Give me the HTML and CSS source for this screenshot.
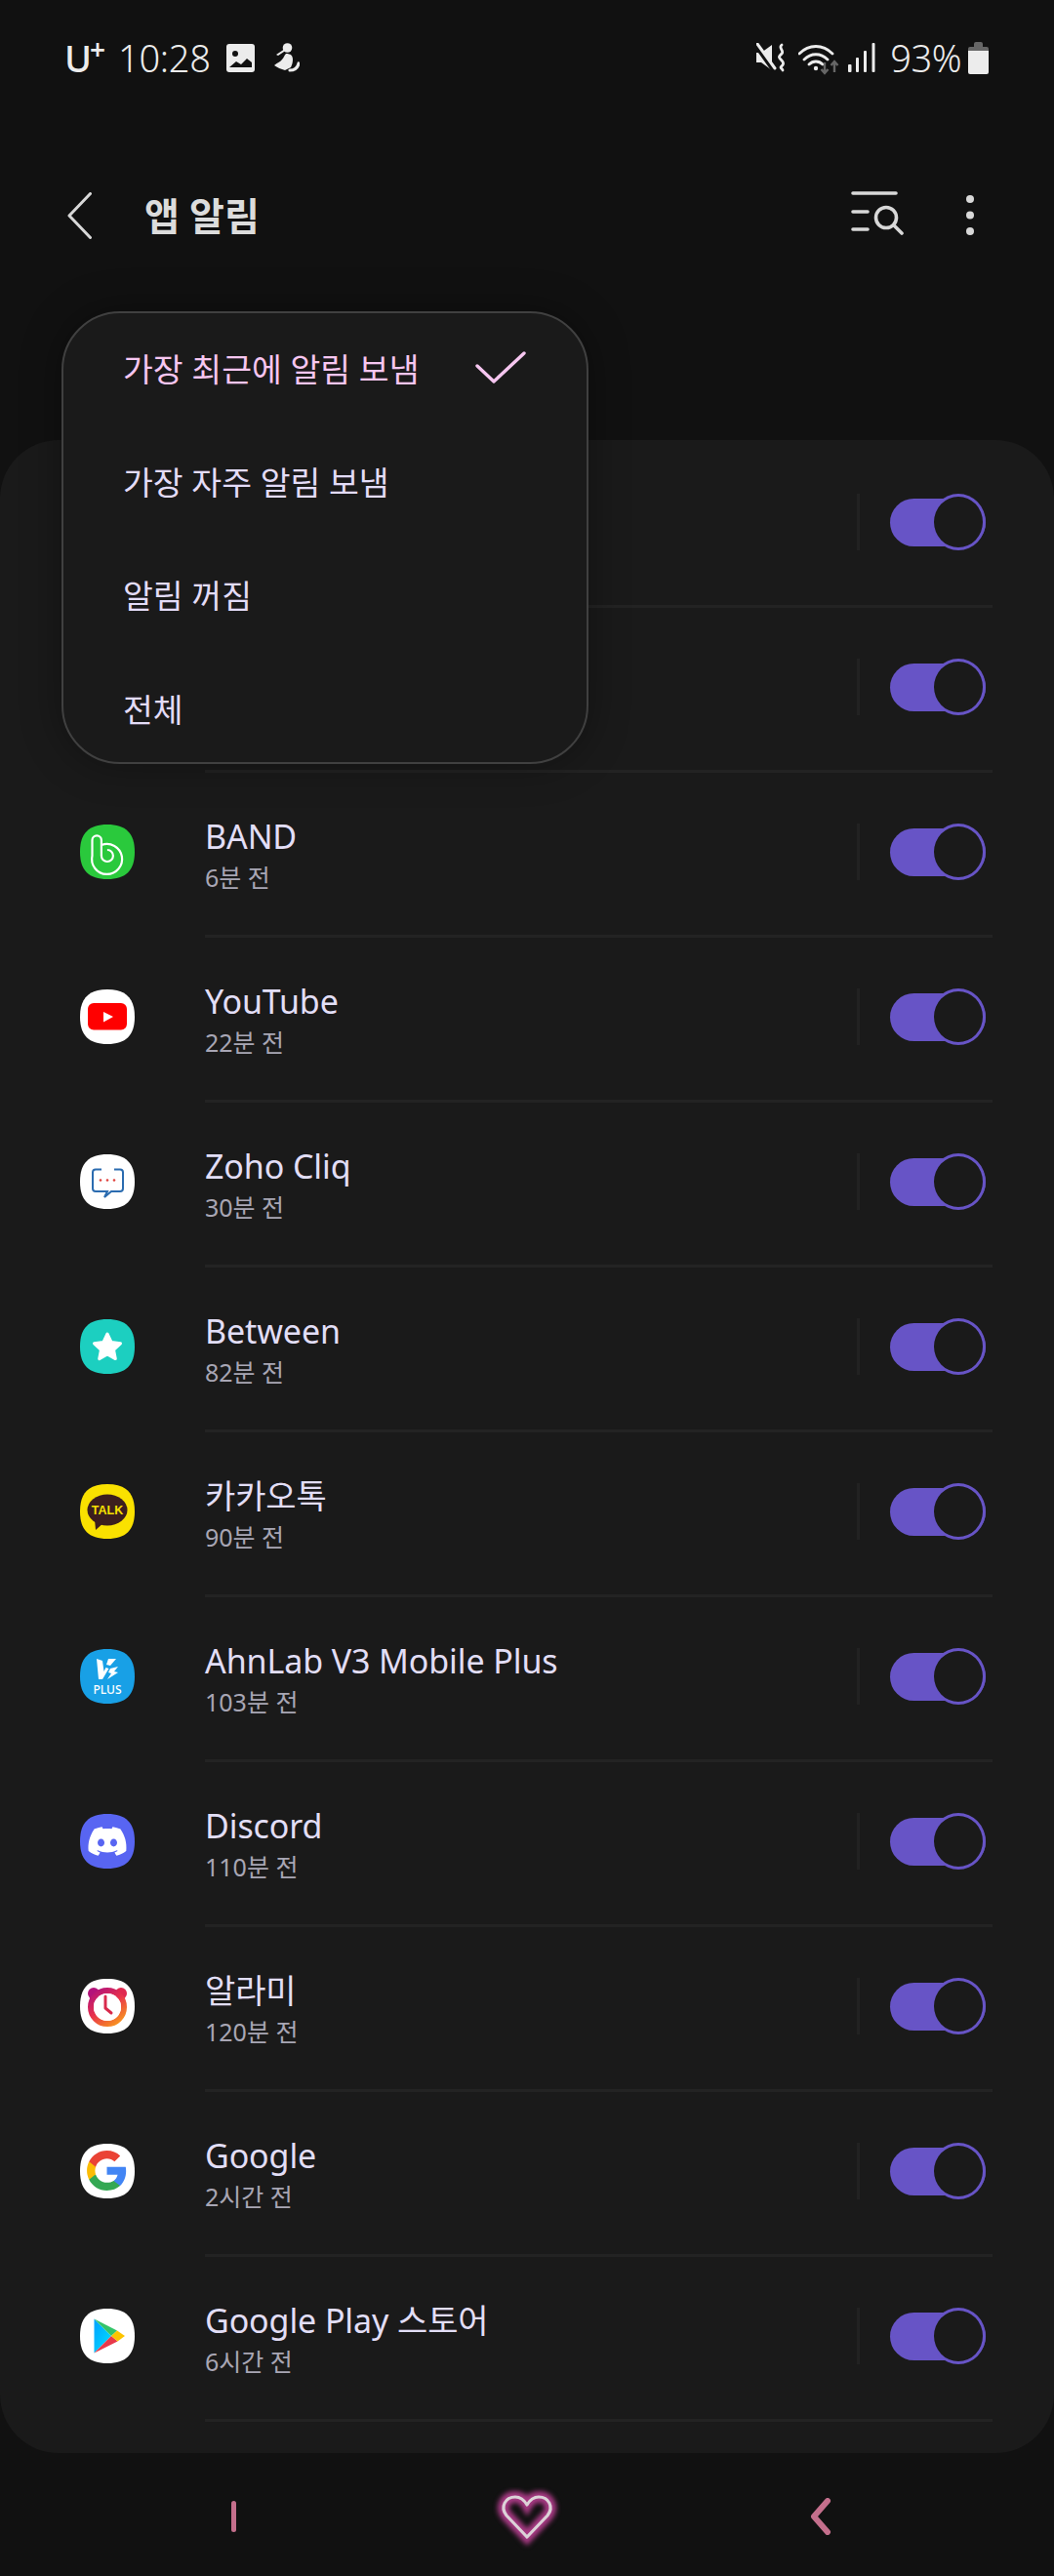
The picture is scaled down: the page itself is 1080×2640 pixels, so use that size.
FILE: index.html
```html
<!DOCTYPE html>
<html lang="ko">
<head>
<meta charset="utf-8">
<title>앱 알림</title>
<link rel="stylesheet" href="styles.css">
</head>
<body>
<div class="screen">
  <div class="status">
    <div class="status-left">
      <span class="carrier">U<span class="plus">+</span></span>
      <span class="time">10:28</span>
      <svg class="st-img" width="29" height="29" viewBox="0 0 29 29"><rect width="29" height="29" rx="3" fill="#ececec"/><circle cx="9" cy="10" r="3" fill="#111"/><path d="M3 24l7-6 5 3 6-6 5 4v5H3z" fill="#111"/></svg>
      <svg class="st-fig" width="27" height="30" viewBox="0 0 27 30"><circle cx="14.500" cy="5" r="4.800" fill="#ececec"/><path d="M3 12l9-6-1 3-6 4z" fill="#ececec"/><path d="M13 11c5 0 7 2 7 6 0 3-1 6-2 8l-6 3c-4-1-8-3-11-5 3-3 6-3 8-6 2-2 2-4 4-6z" fill="#ececec"/><path d="M17 28c4.500 0 8-2.500 9-7" fill="none" stroke="#ececec" stroke-width="3.200" stroke-linecap="round"/></svg>
    </div>
    <div class="status-right">
      <svg class="st-mute" width="29" height="30" viewBox="0 0 29 30"><path d="M0 10h5l11-8v26l-11-8H0z" fill="#ececec"/><path d="M0 3l18 25" stroke="#111" stroke-width="5"/><path d="M1 1l18 25" stroke="#ececec" stroke-width="3" stroke-linecap="round"/><path d="M26 2c-4 3 3 6 0 9s-4 3 0 7-1 6-1 7 2 2 2 3" fill="none" stroke="#ececec" stroke-width="2.800" stroke-linecap="round"/></svg>
      <svg class="st-wifi" width="42" height="32" viewBox="0 0 42 32"><path d="M1 10C11 0 25 0 35 10M6 16c7-7 17-7 24 0M11 21c4-4 10-4 14 0" fill="none" stroke="#ececec" stroke-width="2.800" stroke-linecap="round"/><circle cx="18" cy="25" r="2.200" fill="#ececec"/><path d="M27 19v11M23.500 26l3.500 4 3.500-4M37 29V18M33.500 22l3.500-4 3.500 4" fill="none" stroke="#666" stroke-width="2.400"/></svg>
      <svg class="st-signal" width="28" height="30" viewBox="0 0 28 30"><g fill="#ececec"><rect x="0" y="22" width="3.500" height="8" rx="1"/><rect x="8" y="15" width="3" height="15" rx="1"/><rect x="16" y="8" width="3" height="22" rx="1"/><rect x="24.500" y="0" width="3" height="30" rx="1"/></g></svg>
      <span class="batt-text">93%</span>
      <svg class="st-batt" width="21" height="33" viewBox="0 0 21 33"><path d="M6 2a2 2 0 0 1 2-2h5a2 2 0 0 1 2 2v3h4a2 2 0 0 1 2 2v2H0V7a2 2 0 0 1 2-2h4z" fill="#666"/><path d="M0 9h21v22a2 2 0 0 1-2 2H2a2 2 0 0 1-2-2z" fill="#ececec"/></svg>
    </div>
  </div>

  <header class="appbar">
    <svg class="back" width="25" height="48" viewBox="0 0 25 48"><path d="M23.500 1.500L2 24l21.500 22.500" fill="none" stroke="#d8d8d8" stroke-width="3" stroke-linecap="round" stroke-linejoin="round"/></svg>
    <h1 class="title">앱 알림</h1>
    <svg class="filter" width="54" height="46" viewBox="0 0 54 46"><g fill="none" stroke="#d8d8d8" stroke-width="3.600" stroke-linecap="round"><path d="M2 2h44M2 21h15M2 39h15"/><circle cx="36" cy="27" r="10.500"/><path d="M44 35l8 8"/></g></svg>
    <svg class="more" width="8" height="41" viewBox="0 0 8 41"><g fill="#d8d8d8"><circle cx="4" cy="4" r="4"/><circle cx="4" cy="20.500" r="4"/><circle cx="4" cy="37" r="4"/></g></svg>
  </header>

  <main class="panel">
    <div class="row"><div class="slot"></div><div class="main"><div class="texts"></div><div class="vline"></div><div class="track"><div class="thumb"></div></div></div></div>
    <div class="row"><div class="slot"></div><div class="main"><div class="texts"></div><div class="vline"></div><div class="track"><div class="thumb"></div></div></div></div>

    <div class="row"><div class="slot">
      <svg class="app app-band" viewBox="0 0 56 56"><path d="M22 21A15.500 15.500 0 1 1 12.500 32V16a4.700 4.700 0 0 1 9.400 0V32a6 6 0 1 0 6-6" fill="none" stroke="#fff" stroke-width="2.200"/></svg>
    </div><div class="main"><div class="texts"><div class="name">BAND</div><div class="sub">6분 전</div></div><div class="vline"></div><div class="track"><div class="thumb"></div></div></div></div>

    <div class="row"><div class="slot">
      <svg class="app app-white" viewBox="0 0 56 56"><rect x="8" y="14" width="40" height="27.500" rx="6" fill="#f00"/><path d="M24 23l10 5-10 5.500z" fill="#fff"/></svg>
    </div><div class="main"><div class="texts"><div class="name">YouTube</div><div class="sub">22분 전</div></div><div class="vline"></div><div class="track"><div class="thumb"></div></div></div></div>

    <div class="row"><div class="slot">
      <svg class="app app-white" viewBox="0 0 56 56"><path d="M22 15.500h-6a3 3 0 0 0-3 3V35a3 3 0 0 0 3 3h12l-3 6 7-6h9a3 3 0 0 0 3-3V18.500a3 3 0 0 0-3-3h-6" fill="none" stroke="#2b6cb0" stroke-width="2"/><g fill="#e0413c"><circle cx="21" cy="26.500" r="1.300"/><circle cx="28" cy="26.500" r="1.300"/><circle cx="35" cy="26.500" r="1.300"/></g></svg>
    </div><div class="main"><div class="texts"><div class="name">Zoho Cliq</div><div class="sub">30분 전</div></div><div class="vline"></div><div class="track"><div class="thumb"></div></div></div></div>

    <div class="row"><div class="slot">
      <svg class="app app-teal" viewBox="0 0 56 56"><path d="M28 15l4 8.500 9.500 1.300-7 6.500 1.800 9.300L28 36l-8.300 4.600 1.800-9.300-7-6.500 9.500-1.300z" fill="#fff" stroke="#fff" stroke-width="3" stroke-linejoin="round"/></svg>
    </div><div class="main"><div class="texts"><div class="name">Between</div><div class="sub">82분 전</div></div><div class="vline"></div><div class="track"><div class="thumb"></div></div></div></div>

    <div class="row"><div class="slot">
      <svg class="app app-kakao" viewBox="0 0 56 56"><ellipse cx="28" cy="26.500" rx="20.500" ry="16" fill="#3c1e1e"/><path d="M15 36l1 11 9-8z" fill="#3c1e1e"/><text class="kakao-text" x="28" y="31">TALK</text></svg>
    </div><div class="main"><div class="texts"><div class="name">카카오톡</div><div class="sub">90분 전</div></div><div class="vline"></div><div class="track"><div class="thumb"></div></div></div></div>

    <div class="row"><div class="slot">
      <svg class="app app-v3" viewBox="0 0 56 56"><path d="M17 10l6 2 1.500 11 2-4 3 1-6.500 11h-4zM29 10h8l-6 7-4-1zM31 20l8-2-4 5 4 1-11 7 4-6-3-1z" fill="#fff"/><text class="v3-text" x="28" y="46">PLUS</text></svg>
    </div><div class="main"><div class="texts"><div class="name">AhnLab V3 Mobile Plus</div><div class="sub">103분 전</div></div><div class="vline"></div><div class="track"><div class="thumb"></div></div></div></div>

    <div class="row"><div class="slot">
      <svg class="app app-discord" viewBox="0 0 56 56"><g transform="translate(8.500 8.500) scale(1.625)"><path fill="#fff" d="M20.317 4.3698a19.7913 19.7913 0 00-4.8851-1.5152.0741.0741 0 00-.0785.0371c-.211.3753-.4447.8648-.6083 1.2495-1.8447-.2762-3.68-.2762-5.4868 0-.1636-.3933-.4058-.8742-.6177-1.2495a.077.077 0 00-.0785-.037 19.7363 19.7363 0 00-4.8852 1.515.0699.0699 0 00-.0321.0277C.5334 9.0458-.319 13.5799.0992 18.0578a.0824.0824 0 00.0312.0561c2.0528 1.5076 4.0413 2.4228 5.9929 3.0294a.0777.0777 0 00.0842-.0276c.4616-.6304.8731-1.2952 1.226-1.9942a.076.076 0 00-.0416-.1057c-.6528-.2476-1.2743-.5495-1.8722-.8923a.077.077 0 01-.0076-.1277c.1258-.0943.2517-.1923.3718-.2914a.0743.0743 0 01.0776-.0105c3.9278 1.7933 8.18 1.7933 12.0614 0a.0739.0739 0 01.0785.0095c.1202.099.246.1981.3728.2924a.077.077 0 01-.0066.1276 12.2986 12.2986 0 01-1.873.8914.0766.0766 0 00-.0407.1067c.3604.698.7719 1.3628 1.225 1.9932a.076.076 0 00.0842.0286c1.961-.6067 3.9495-1.5219 6.0023-3.0294a.077.077 0 00.0313-.0552c.5004-5.177-.8382-9.6739-3.5485-13.6604a.061.061 0 00-.0312-.0286zM8.02 15.3312c-1.1825 0-2.1569-1.0857-2.1569-2.419 0-1.3332.9555-2.4189 2.157-2.4189 1.2108 0 2.1757 1.0952 2.1568 2.419 0 1.3332-.9555 2.4189-2.1569 2.4189zm7.9748 0c-1.1825 0-2.1569-1.0857-2.1569-2.419 0-1.3332.9554-2.4189 2.1569-2.4189 1.2108 0 2.1757 1.0952 2.1568 2.419 0 1.3332-.946 2.4189-2.1568 2.4189Z"/></g></svg>
    </div><div class="main"><div class="texts"><div class="name">Discord</div><div class="sub">110분 전</div></div><div class="vline"></div><div class="track"><div class="thumb"></div></div></div></div>

    <div class="row"><div class="slot">
      <svg class="app app-white" viewBox="0 0 56 56"><defs><linearGradient id="alarm" x1="0.100" y1="0" x2="0.800" y2="1"><stop offset="0" stop-color="#b3127a"/><stop offset="0.500" stop-color="#e8324a"/><stop offset="1" stop-color="#f79021"/></linearGradient></defs><circle cx="14" cy="15" r="6" fill="#b3127a"/><circle cx="42" cy="15" r="6" fill="#e0284f"/><circle cx="28" cy="29" r="17" fill="none" stroke="url(#alarm)" stroke-width="6"/><circle cx="28" cy="29" r="14" fill="#fff"/><path d="M26 18v12l6 5" fill="none" stroke="#d92a4c" stroke-width="3" stroke-linecap="round" stroke-linejoin="round"/></svg>
    </div><div class="main"><div class="texts"><div class="name">알라미</div><div class="sub">120분 전</div></div><div class="vline"></div><div class="track"><div class="thumb"></div></div></div></div>

    <div class="row"><div class="slot">
      <svg class="app app-white" viewBox="0 0 56 56"><g transform="translate(5.200 5.200) scale(1.860)"><path fill="#4285f4" d="M22.560 12.250c0-.78-.07-1.530-.2-2.250H12v4.260h5.920c-.26 1.370-1.040 2.530-2.210 3.310v2.770h3.570c2.080-1.920 3.280-4.740 3.280-8.090z"/><path fill="#34a853" d="M12 23c2.970 0 5.460-.98 7.280-2.660l-3.570-2.770c-.98.66-2.230 1.060-3.710 1.060-2.860 0-5.290-1.930-6.160-4.530H2.180v2.840C3.990 20.530 7.700 23 12 23z"/><path fill="#fbbc05" d="M5.840 14.090c-.22-.66-.35-1.360-.35-2.090s.13-1.430.35-2.090V7.070H2.180C1.430 8.550 1 10.220 1 12s.43 3.450 1.180 4.930l2.850-2.220.81-.62z"/><path fill="#ea4335" d="M12 5.380c1.620 0 3.060.56 4.210 1.640l3.150-3.150C17.450 2.090 14.970 1 12 1 7.700 1 3.990 3.470 2.180 7.070l3.660 2.840c.87-2.600 3.300-4.530 6.160-4.530z"/></g></svg>
    </div><div class="main"><div class="texts"><div class="name">Google</div><div class="sub">2시간 전</div></div><div class="vline"></div><div class="track"><div class="thumb"></div></div></div></div>

    <div class="row"><div class="slot">
      <svg class="app app-white" viewBox="0 0 56 56"><defs><linearGradient id="playb" x1="0" y1="0" x2="1" y2="1"><stop offset="0" stop-color="#00a0ff"/><stop offset="1" stop-color="#00e2ff"/></linearGradient></defs><path d="M14.500 10.500L32 28 14.500 45.500z" fill="url(#playb)"/><path d="M14.500 10.500L38 22.500 32 28z" fill="#34c46a"/><path d="M14.500 45.500L32 28l6.500 5.500z" fill="#e8394a"/><path d="M38 22.500L46 28l-7.500 5.500L32 28z" fill="#fdc400"/></svg>
    </div><div class="main"><div class="texts"><div class="name">Google Play 스토어</div><div class="sub">6시간 전</div></div><div class="vline"></div><div class="track"><div class="thumb"></div></div></div></div>
  </main>

  <nav class="navbar">
    <div class="nav-slot"><div class="nav-bar"></div></div>
    <div class="nav-slot">
      <svg class="heart" width="80" height="70" viewBox="0 0 80 70"><path class="heart-glow" d="M40 51L19 29C12 20 18 10 28 10c5 0 9 3 12 8 3-5 7-8 12-8 10 0 16 10 9 19z"/><path class="heart-line" d="M40 51L19 29C12 20 18 10 28 10c5 0 9 3 12 8 3-5 7-8 12-8 10 0 16 10 9 19z"/></svg>
    </div>
    <div class="nav-slot">
      <svg class="nav-back" width="22" height="38" viewBox="0 0 22 38"><path d="M18 3L4 19l14 16" fill="none" stroke="#c46f8c" stroke-width="6" stroke-linecap="round" stroke-linejoin="round"/></svg>
    </div>
  </nav>

  <div class="popup">
    <div class="pop-item pop-active"><span>가장 최근에 알림 보냄</span>
      <svg class="check" width="52" height="33" viewBox="0 0 52 33"><path d="M2 15l17 16L50 2" fill="none" stroke="#f6c6f0" stroke-width="3.400" stroke-linecap="round" stroke-linejoin="round"/></svg>
    </div>
    <div class="pop-item"><span>가장 자주 알림 보냄</span></div>
    <div class="pop-item"><span>알림 꺼짐</span></div>
    <div class="pop-item"><span>전체</span></div>
  </div>
</div>
</body>
</html>
```
FILE: styles.css
```css
* { box-sizing: border-box; }
html, body { margin: 0; padding: 0; background: #111; }
body { font-family: "Noto Sans", "Noto Sans CJK KR", sans-serif; }

.screen {
  position: relative;
  width: 1080px;
  height: 2640px;
  overflow: hidden;
  background: #111;
  display: flex;
  flex-direction: column;
}

/* status bar */
.status {
  height: 90px;
  display: flex;
  justify-content: space-between;
  align-items: flex-start;
  padding: 42px 67px 0 66px;
  color: #ececec;
}
.status-left, .status-right { display: flex; align-items: center; height: 34px; }
.carrier { font-size: 38px; font-weight: 500; line-height: 34px; position: relative; width: 55px; }
.plus { position: absolute; left: 26px; top: -9px; font-size: 28px; line-height: 34px; font-weight: 600; }
.time { font-size: 38px; font-weight: 300; line-height: 34px; letter-spacing: -0.300px; margin-right: 16px; }
.st-fig { margin-left: 19px; }
.st-wifi { margin-left: 14px; margin-top: 3px; }
.st-signal { margin-left: 9px; }
.batt-text { font-size: 38px; font-weight: 300; line-height: 34px; margin-left: 15px; letter-spacing: -0.500px; }
.st-batt { margin-left: 7px; }

/* app bar */
.appbar {
  height: 361px;
  display: flex;
  align-items: flex-start;
  padding: 107px 82px 0 69px;
  color: #dcdcdc;
}
.title {
  margin: 1px 0 0 54px;
  flex: 1;
  font-size: 39px;
  font-weight: 700;
  line-height: 46px;
  color: #dcdcdc;
}
.filter { margin-top: -1px; }
.more { margin: 3px 0 0 64px; }

/* list panel */
.panel {
  height: 2063px;
  background: #1a1a1a;
  border-radius: 60px;
  padding-top: 3px;
}
.row { height: 169px; display: flex; }
.slot {
  width: 210px;
  flex: none;
  padding: 0 0 7px 82px;
  display: flex;
  align-items: center;
}
.main {
  flex: 1;
  margin-right: 63px;
  padding: 0 7px 4px 0;
  border-bottom: 3px solid #232323;
  display: flex;
  align-items: center;
}
.texts { flex: 1; margin-top: 10px; }
.name { font-size: 34px; line-height: 40px; color: #e2def6; letter-spacing: -0.100px; }
.sub { font-size: 25px; line-height: 40px; padding-top: 2px; height: 42px; color: #a8a6b4; }
.vline { width: 3px; height: 58px; background: #222; margin-right: 31px; }

.track {
  width: 98px;
  height: 49px;
  border-radius: 25px;
  background: #6754c6;
  display: flex;
  justify-content: flex-end;
  align-items: center;
}
.thumb {
  width: 56px;
  height: 58px;
  flex: none;
  border-radius: 50%;
  background: #1a1a1a;
  border: 3px solid #6754c6;
}

/* app icons */
.app {
  width: 56px;
  height: 56px;
  flex: none;
  display: block;
  clip-path: path("M28 0C47 0 56 9 56 28S47 56 28 56 0 47 0 28 9 0 28 0Z");
}
.app-white { background: #fff; }
.app-band { background: #2ac93c; }
.app-teal { background: #1ccfc0; }
.app-kakao { background: #fae100; }
.app-v3 { background: #18a0e6; }
.app-discord { background: #5865f2; }
.kakao-text {
  font-family: "Liberation Sans", sans-serif;
  font-size: 12.500px;
  font-weight: 700;
  fill: #fae100;
  text-anchor: middle;
}
.v3-text {
  font-family: "Noto Sans", sans-serif;
  font-size: 12px;
  font-weight: 500;
  fill: #fff;
  text-anchor: middle;
}

/* nav bar */
.navbar {
  flex: 1;
  display: flex;
  justify-content: center;
  align-items: center;
  padding-top: 4px;
}
.nav-slot { width: 301px; display: flex; justify-content: center; align-items: center; }
.nav-bar { width: 5px; height: 32px; border-radius: 3px; background: #c46f8c; }
.heart { margin-top: 9px; }
.heart-glow { fill: none; stroke: #a83a84; stroke-width: 12; filter: blur(2.500px); }
.heart-line { fill: none; stroke: #dcd2d8; stroke-width: 3.200; stroke-linejoin: round; }

/* popup */
.popup {
  position: absolute;
  left: 63px;
  top: 319px;
  width: 540px;
  height: 464px;
  padding: 0 62px 0 61px;
  background: #1a1a1a;
  border: 2px solid #404040;
  border-radius: 60px;
  box-shadow: 0 0 40px rgba(0, 0, 0, 0.35);
  display: flex;
  flex-direction: column;
}
.pop-item {
  flex: none;
  height: 116.300px;
  display: flex;
  align-items: center;
  justify-content: space-between;
  font-size: 33.500px;
  color: #e3dcf7;
}
.pop-item:first-child { margin-top: -3px; }
.pop-active { color: #f6c6f0; }
```
